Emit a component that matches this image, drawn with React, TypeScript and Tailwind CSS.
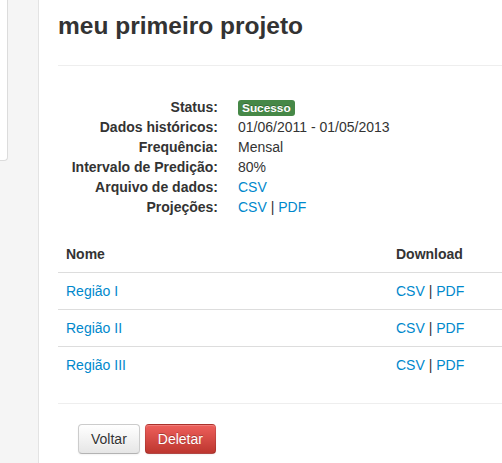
export default function App() {
  const details: { label: string; value: React.ReactNode }[] = [
    {
      label: "Status:",
      value: (
        <span className="inline-block rounded-[3px] bg-[#468847] px-1 pb-[2px] pt-[2px] align-baseline text-[11.844px] font-bold leading-[12px] text-white [text-shadow:0_-1px_0_rgba(0,0,0,0.25)]">
          Sucesso
        </span>
      ),
    },
    { label: "Dados históricos:", value: "01/06/2011 - 01/05/2013" },
    { label: "Frequência:", value: "Mensal" },
    { label: "Intervalo de Predição:", value: "80%" },
    { label: "Arquivo de dados:", value: <a className="text-[#0088cc]">CSV</a> },
    {
      label: "Projeções:",
      value: (
        <>
          <a className="text-[#0088cc]">CSV</a> | <a className="text-[#0088cc]">PDF</a>
        </>
      ),
    },
  ];

  const regions = ["Região I", "Região II", "Região III"];

  return (
    <div className="flex min-h-[463px] overflow-hidden bg-white font-['Liberation_Sans',Arial,sans-serif] text-[14px] leading-5 text-[#333]">
      {/* Sidebar */}
      <div className="w-[39px] shrink-0 border-r border-[#e3e3e3] bg-[#f5f5f5]">
        <div className="h-[161px] w-[8px] rounded-br-[4px] border-b border-r border-[#dcdcdc] bg-white" />
      </div>

      {/* Main */}
      <div className="min-w-0 flex-1 pl-[19px] pt-[6px]">
        <div className="border-b border-[#eee] pb-[9px]">
          <h3 className="mb-[10px] text-[24.5px] font-bold leading-[40px] text-[#333]">
            meu primeiro projeto
          </h3>
        </div>

        <dl className="mt-[31px] grid grid-cols-[160px_1fr] gap-x-5">
          {details.map((d) => (
            <div key={d.label} className="contents">
              <dt className="text-right font-bold">{d.label}</dt>
              <dd>{d.value}</dd>
            </div>
          ))}
        </dl>

        <table className="mt-[19px] w-full border-collapse">
          <thead>
            <tr>
              <th className="w-[330px] p-2 text-left font-bold">Nome</th>
              <th className="p-2 text-left font-bold">Download</th>
            </tr>
          </thead>
          <tbody>
            {regions.map((r) => (
              <tr key={r} className="border-t border-[#ddd]">
                <td className="p-2">
                  <a className="text-[#0088cc]">{r}</a>
                </td>
                <td className="p-2">
                  <a className="text-[#0088cc]">CSV</a> | <a className="text-[#0088cc]">PDF</a>
                </td>
              </tr>
            ))}
          </tbody>
        </table>

        <hr className="my-5 border-t border-b-0 border-[#eee]" />

        <div className="flex gap-[5px] pl-5">
          <button className="rounded-[4px] border border-[#ccc] border-b-[#b3b3b3] bg-linear-to-b from-white to-[#e6e6e6] px-3 py-1 text-[14px] leading-5 text-[#333] shadow-[inset_0_1px_0_rgba(255,255,255,0.2),0_1px_2px_rgba(0,0,0,0.05)] [text-shadow:0_1px_1px_rgba(255,255,255,0.75)]">
            Voltar
          </button>
          <button className="rounded-[4px] border border-[rgba(0,0,0,0.1)] border-b-[rgba(0,0,0,0.25)] bg-linear-to-b from-[#ee5f5b] to-[#bd362f] px-3 py-1 text-[14px] leading-5 text-white shadow-[inset_0_1px_0_rgba(255,255,255,0.2),0_1px_2px_rgba(0,0,0,0.05)] [text-shadow:0_-1px_0_rgba(0,0,0,0.25)]">
            Deletar
          </button>
        </div>
      </div>
    </div>
  );
}
